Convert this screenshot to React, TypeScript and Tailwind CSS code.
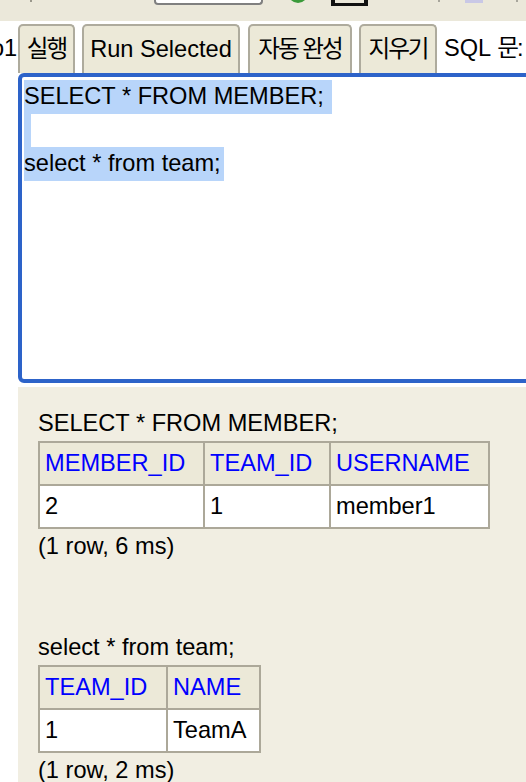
import React from 'react';

type Col = { name: string; w: string };

interface ResultProps {
  sql: string;
  cols: Col[];
  row: string[];
  stats: string;
  className?: string;
}

function ResultBlock({ sql, cols, row, stats, className }: ResultProps) {
  return (
    <div className={className}>
      <div className="leading-[27px] whitespace-nowrap">{sql}</div>
      <table className="mt-[4px] border-collapse table-fixed border-2 border-[#aca899]">
        <thead>
          <tr>
            {cols.map((c) => (
              <th
                key={c.name}
                className={`${c.w} h-[43px] border-2 border-[#aca899] bg-[#ece9d8] p-0 pl-[5px] text-left align-middle font-normal text-[#0000ff]`}
              >
                {c.name}
              </th>
            ))}
          </tr>
        </thead>
        <tbody>
          <tr>
            {row.map((v, i) => (
              <td key={i} className="h-[43px] border-2 border-[#aca899] bg-white p-0 pl-[5px] align-middle">
                {v}
              </td>
            ))}
          </tr>
        </tbody>
      </table>
      <div className="mt-[4px] leading-[27px] whitespace-nowrap">{stats}</div>
    </div>
  );
}

export default function App() {
  const btn = 'h-[49px] shrink-0 flex items-center justify-center border-2 border-b-0 border-[#aeab9d] rounded-t-[5px] bg-[#ece9d8]';
  const ko = 'tracking-[-2px]';

  return (
    <div className="w-[526px] h-[782px] overflow-hidden bg-white text-black text-[23.6px] font-['Liberation_Sans','Noto_Sans_CJK_KR',sans-serif]">
      {/* browser toolbar strip, cut off at the top */}
      <div className="h-[21px] bg-[#ebe8da] flex items-start overflow-hidden">
        <div className="ml-[30px] w-[2px] h-[2px] bg-[#9a988c]" />
        <div className="ml-[122px] w-[109px] h-[5px] bg-white border-2 border-t-0 border-[#808080] rounded-b-[4px]" />
        <div className="ml-[25px] -mt-[17px] w-[20px] h-[20px] rounded-full bg-[#3a9a3a]" />
        <svg className="ml-[23px]" width="37" height="6" viewBox="0 0 37 6">
          <path d="M0 0h4v3h29V0h4v6H0z" fill="#111" />
        </svg>
        <div className="ml-[70px] w-[2px] h-[2px] bg-[#a8a69c]" />
        <div className="ml-[25px] w-[18px] h-[3px] bg-[#c9c8e6]" />
        <div className="ml-[33px] w-[2px] h-[2px] bg-[#a8a69c]" />
      </div>

      {/* button row */}
      <div className="mt-[3px] flex items-start whitespace-nowrap">
        <div className="w-[18px] h-[49px] overflow-hidden flex items-center">
          <span className="-ml-[9px]">o1</span>
        </div>
        <div className={`${btn} w-[57px]`}>
          <span className={ko}>실행</span>
        </div>
        <div className={`${btn} ml-[7px] w-[158px]`}>Run Selected</div>
        <div className={`${btn} ml-[8px] w-[104px]`}>
          <span className={ko}>자동 완성</span>
        </div>
        <div className={`${btn} ml-[7px] w-[78px]`}>
          <span className={ko}>지우기</span>
        </div>
        <div className="ml-[7px] h-[49px] flex items-center">
          SQL <span className={`ml-[6px] ${ko}`}>문:</span>
        </div>
      </div>

      {/* sql editor with selected text */}
      <div className="ml-[18px] w-[530px] h-[310px] border-4 border-[#2d63c9] rounded-[6px] bg-white pt-[3px] pl-[2px]">
        <div className="flex h-[33.5px]">
          <span className="flex h-full items-center bg-[#b8d5fa] pr-[8px] whitespace-nowrap">SELECT * FROM MEMBER;</span>
        </div>
        <div className="flex h-[33.5px]">
          <span className="h-full w-[7px] bg-[#b8d5fa]" />
        </div>
        <div className="flex h-[33.5px]">
          <span className="flex h-full items-center bg-[#b8d5fa] pr-[3px] whitespace-nowrap">select * from team;</span>
        </div>
      </div>

      {/* results */}
      <div className="ml-[18px] mt-[4px] h-[400px] bg-[#f1eee2] pl-[20px] pt-[23px]">
        <ResultBlock
          sql="SELECT * FROM MEMBER;"
          cols={[
            { name: 'MEMBER_ID', w: 'w-[165px]' },
            { name: 'TEAM_ID', w: 'w-[126px]' },
            { name: 'USERNAME', w: 'w-[159px]' },
          ]}
          row={['2', '1', 'member1']}
          stats="(1 row, 6 ms)"
        />
        <ResultBlock
          className="mt-[74px]"
          sql="select * from team;"
          cols={[
            { name: 'TEAM_ID', w: 'w-[128px]' },
            { name: 'NAME', w: 'w-[93px]' },
          ]}
          row={['1', 'TeamA']}
          stats="(1 row, 2 ms)"
        />
      </div>
    </div>
  );
}
